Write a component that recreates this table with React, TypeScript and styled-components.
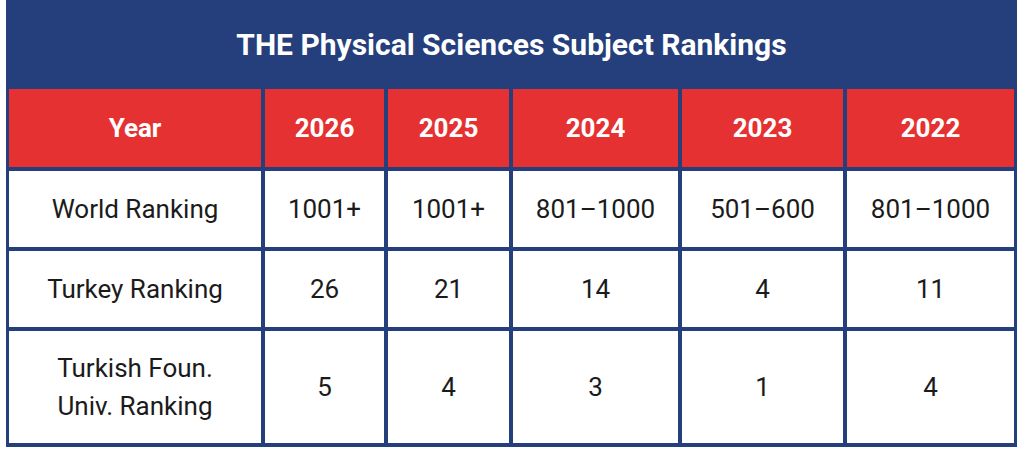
import React from "react";
import styled, { createGlobalStyle } from "styled-components";

const Global = createGlobalStyle`
  html, body { margin: 0; padding: 0; background: #ffffff; }
  body { font-family: Roboto, "Liberation Sans", sans-serif; }
`;

const NAVY = "#243f7b";
const RED = "#e53131";

const Frame = styled.div`
  margin-left: 6px;
  width: 1011px;
  background: ${NAVY};
  padding: 0 3px 4px 3px;
  box-sizing: border-box;
`;

const Title = styled.h1`
  margin: 0;
  height: 89px;
  display: flex;
  align-items: center;
  justify-content: center;
  color: #ffffff;
  font-size: 30px;
  font-weight: 700;
  letter-spacing: 0;
`;

const Grid = styled.div`
  display: grid;
  grid-template-columns: 252px 119px 121px 165px 161px 167px;
  grid-template-rows: 78px 76px 76px 112px;
  gap: 4px;
`;

const Cell = styled.div<{ $head?: boolean }>`
  display: flex;
  align-items: center;
  justify-content: center;
  text-align: center;
  background: ${(p) => (p.$head ? RED : "#ffffff")};
  color: ${(p) => (p.$head ? "#ffffff" : "#1b1b1b")};
  font-size: 26px;
  font-weight: ${(p) => (p.$head ? 700 : 400)};
  line-height: 38px;
`;

const header = ["Year", "2026", "2025", "2024", "2023", "2022"];
const rows: React.ReactNode[][] = [
  ["World Ranking", "1001+", "1001+", "801–1000", "501–600", "801–1000"],
  ["Turkey Ranking", "26", "21", "14", "4", "11"],
  [
    <>
      Turkish Foun.
      <br />
      Univ. Ranking
    </>,
    "5",
    "4",
    "3",
    "1",
    "4",
  ],
];

export default function App() {
  return (
    <>
      <Global />
      <Frame>
        <Title>THE Physical Sciences Subject Rankings</Title>
        <Grid>
          {header.map((h) => (
            <Cell key={h} $head>
              {h}
            </Cell>
          ))}
          {rows.map((r, i) =>
            r.map((c, j) => <Cell key={`${i}-${j}`}>{c}</Cell>)
          )}
        </Grid>
      </Frame>
    </>
  );
}
